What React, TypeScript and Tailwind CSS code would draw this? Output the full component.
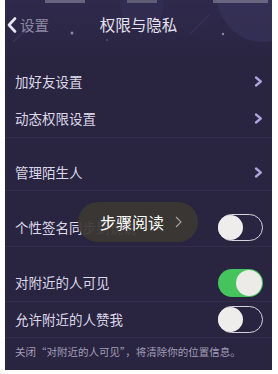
import React from "react";

const font = { fontFamily: '"Noto Sans CJK SC", "Noto Sans", sans-serif' };

function Chevron() {
  return (
    <svg width="9" height="11" viewBox="0 0 9 11" className="shrink-0">
      <path d="M2 1.5 L6.8 5.5 L2 9.5" fill="none" stroke="#aaa3dc" strokeWidth="2.3" strokeLinecap="round" strokeLinejoin="round" />
    </svg>
  );
}

function Toggle({ on }: { on: boolean }) {
  if (on) {
    return (
      <div className="w-[45px] h-[28px] rounded-full bg-[#45c35d] flex items-center justify-end pr-[1px] shrink-0">
        <div className="w-[26px] h-[26px] rounded-full bg-[#ecebe8]" />
      </div>
    );
  }
  return (
    <div className="w-[45px] h-[27px] rounded-full border-[1.5px] border-[#d6d4de] flex items-center shrink-0">
      <div className="w-[25px] h-[25px] rounded-full bg-[#eeedec] -ml-[1px]" />
    </div>
  );
}

function Row({ label, h, right, border = false }: { label: string; h: string; right: React.ReactNode; border?: boolean }) {
  return (
    <div className={`flex items-center justify-between pl-[10px] pr-[9px] ${h} ${border ? "border-b border-[#332e4b]" : ""}`}>
      <span className="text-[13.5px] text-[#dcd8ea] leading-none">{label}</span>
      {right}
    </div>
  );
}

export default function App() {
  return (
    <div className="w-[278px] h-[374px] bg-white relative overflow-hidden" style={font}>
      <div className="ml-[5px] w-[267px] h-[370px] bg-[#29243f] flex flex-col">
        {/* Header */}
        <div className="relative h-[56px] bg-gradient-to-b from-[#2f2a4c] to-[#2a2542] shrink-0 overflow-hidden">
          <svg className="absolute inset-0" width="267" height="56" viewBox="0 0 267 56">
            <circle cx="258" cy="-4" r="46" fill="#363156" opacity="0.8" />
            <circle cx="137" cy="6" r="22" fill="#332e55" opacity="0.6" />
            <line x1="8" y1="42" x2="30" y2="22" stroke="#38335a" strokeWidth="1.5" />
            <line x1="185" y1="34" x2="205" y2="14" stroke="#35305a" strokeWidth="1.5" />
            <circle cx="67" cy="33" r="1.5" fill="#8a86a3" />
            <circle cx="218" cy="34" r="1.2" fill="#8a86a3" />
            <circle cx="102" cy="40" r="0.8" fill="#6e6a8a" />
            <rect x="40" y="0" width="40" height="3" fill="#8f8ba0" opacity="0.6" />
            <rect x="122" y="0" width="30" height="3" fill="#8f8ba0" opacity="0.5" />
            <rect x="208" y="0" width="55" height="3" fill="#8f8ba0" opacity="0.6" />
          </svg>
          <div className="relative h-[50px] grid grid-cols-[1fr_auto_1fr] items-center">
            <div className="flex items-center pl-[2px] gap-[3px]">
              <svg width="10" height="16" viewBox="0 0 10 16">
                <path d="M8 1.5 L2 8 L8 14.5" fill="none" stroke="#e8e6f0" strokeWidth="2.6" strokeLinecap="round" strokeLinejoin="round" />
              </svg>
              <span className="text-[14.5px] text-[#8c88a2] leading-none">设置</span>
            </div>
            <span className="text-[15.5px] text-[#e6e3f0] leading-none">权限与隐私</span>
            <div />
          </div>
        </div>

        <div className="h-[7px]" />
        <Row label="加好友设置" h="h-[37px]" right={<Chevron />} />
        <Row label="动态权限设置" h="h-[38px]" right={<Chevron />} border />
        <div className="h-[17px]" />
        <Row label="管理陌生人" h="h-[36px]" right={<Chevron />} border />
        <div className="h-[18px]" />
        <Row label="个性签名同步到说说" h="h-[38px]" right={<Toggle on={false} />} border />
        <div className="h-[17px]" />
        <Row label="对附近的人可见" h="h-[38px]" right={<Toggle on={true} />} border />
        <Row label="允许附近的人赞我" h="h-[36px]" right={<Toggle on={false} />} border />
        <div className="h-[29px] flex items-center pl-[10px]">
          <span className="text-[10.5px] text-[#a29eb8] leading-none">关闭“对附近的人可见”，将清除你的位置信息。</span>
        </div>
      </div>

      {/* Overlay pill */}
      <div className="absolute left-[78px] top-[202px] w-[120px] h-[40px] rounded-full bg-[rgba(58,56,52,0.93)] flex items-center pl-[22px] gap-[11px]">
        <span className="text-[16px] text-white leading-none">步骤阅读</span>
        <svg width="7" height="12" viewBox="0 0 7 12">
          <path d="M1 1 L6 6 L1 11" fill="none" stroke="#a8a6a2" strokeWidth="1.1" />
        </svg>
      </div>
    </div>
  );
}
